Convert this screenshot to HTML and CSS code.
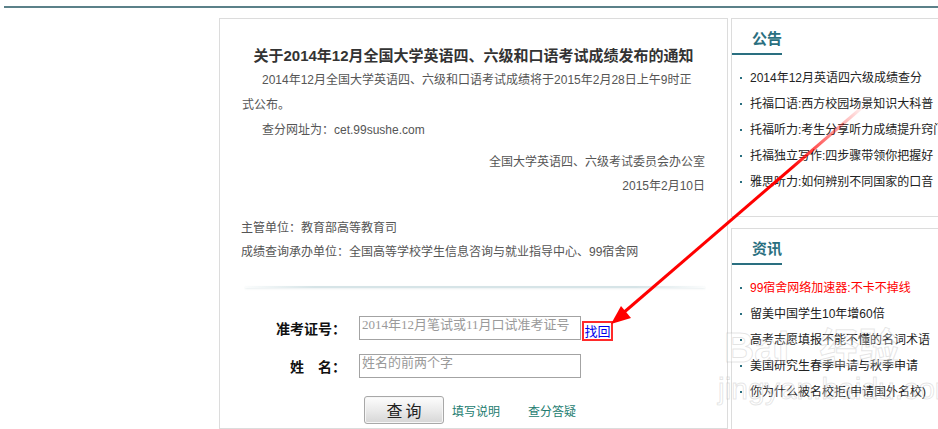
FILE: index.html
```html
<!DOCTYPE html>
<html lang="zh-CN">
<head>
<meta charset="utf-8">
<title>CET 成绩查询</title>
<link rel="stylesheet" href="styles.css">
</head>
<body>
<div class="topline"></div>
<div class="page">
  <div class="main">
    <h1 class="title">关于2014年12月全国大学英语四、六级和口语考试成绩发布的通知</h1>
    <p class="para">2014年12月全国大学英语四、六级和口语考试成绩将于2015年2月28日上午9时正<br>式公布。</p>
    <p class="para">查分网址为：cet.99sushe.com</p>
    <p class="sign">全国大学英语四、六级考试委员会办公室<br>2015年2月10日</p>
    <p class="org">主管单位：教育部高等教育司<br>成绩查询承办单位：全国高等学校学生信息咨询与就业指导中心、99宿舍网</p>
    <div class="sep"></div>
    <form class="query">
      <div class="row">
        <label class="lbl">准考证号：</label>
        <input class="field" type="text" placeholder="2014年12月笔试或11月口试准考证号">
        <a class="find" href="#">找回</a>
      </div>
      <div class="row row2">
        <label class="lbl">姓&emsp;名：</label>
        <input class="field" type="text" placeholder="姓名的前两个字">
      </div>
      <div class="actions">
        <button class="btn" type="button">查询</button>
        <a class="help" href="#">填写说明</a>
        <a class="help help2" href="#">查分答疑</a>
      </div>
    </form>
  </div>
  <div class="side">
    <div class="panel">
      <div class="phead">公告</div>
      <ul class="plist">
        <li>2014年12月英语四六级成绩查分</li>
        <li>托福口语:西方校园场景知识大科普</li>
        <li>托福听力:考生分享听力成绩提升窍门</li>
        <li>托福独立写作:四步骤带领你把握好</li>
        <li>雅思听力:如何辨别不同国家的口音</li>
      </ul>
    </div>
    <div class="panel panel2">
      <div class="phead">资讯</div>
      <ul class="plist">
        <li class="hot">99宿舍网络加速器:不卡不掉线</li>
        <li>留美中国学生10年增60倍</li>
        <li>高考志愿填报不能不懂的名词术语</li>
        <li>美国研究生春季申请与秋季申请</li>
        <li>你为什么被名校拒(申请国外名校)</li>
      </ul>
    </div>
  </div>
</div>
<div class="watermark">
  <div class="wm1">Bai<span class="wm-cn">经验</span></div>
  <div class="wm2">jingyan.baidu.com</div>
</div>
<svg class="arrow" width="938" height="429" viewBox="0 0 938 429">
  <defs>
    <linearGradient id="fade" gradientUnits="userSpaceOnUse" x1="866" y1="104" x2="790" y2="170">
      <stop offset="0" stop-color="#ff0000" stop-opacity="0"/>
      <stop offset="1" stop-color="#ff0000" stop-opacity="1"/>
    </linearGradient>
  </defs>
  <line x1="866" y1="104" x2="622" y2="314" stroke="url(#fade)" stroke-width="3"/>
  <polygon points="611,324 631,318 621,306" fill="#ff0000"/>
</svg>
</body>
</html>
```
FILE: styles.css
```css
html, body {
  margin: 0;
  padding: 0;
  background: #fff;
  overflow: hidden;
}
body {
  font-family: "Liberation Sans", "Noto Sans CJK SC", sans-serif;
  font-size: 12px;
  color: #555;
  width: 938px;
  height: 429px;
  position: relative;
}
.topline {
  margin: 6px 0 0 4px;
  height: 2px;
  background: #5b8189;
}
.page {
  display: flex;
  gap: 3px;
  margin-top: 10px;
  padding-left: 219px;
}
.main {
  box-sizing: border-box;
  width: 509px;
  height: 411px;
  flex: none;
  border: 1px solid #dcdcdc;
  padding: 24px 22px 0 22px;
}
.title {
  margin: 0;
  font-size: 15px;
  line-height: 25px;
  font-weight: bold;
  color: #333;
  text-align: center;
  white-space: nowrap;
}
.para {
  margin: 0;
  line-height: 25px;
  text-indent: 20px;
}
.sign {
  margin: 7px 0 0;
  line-height: 24px;
  text-align: right;
}
.org {
  margin: 18px 0 0;
  line-height: 24px;
  margin-left: -1px;
}
.sep {
  margin: 22px 0 0 3px;
  width: 460px;
  height: 2px;
  background: linear-gradient(to right, rgba(214,228,231,0.1), #d6e4e7 15%, #d6e4e7 85%, rgba(214,228,231,0.1));
  box-shadow: 0 1px 2px rgba(220,230,232,0.6);
}
.query {
  margin-top: 28px;
}
.row {
  display: flex;
  align-items: center;
  height: 24px;
}
.row2 {
  margin-top: 14px;
}
.lbl {
  width: 104px;
  margin-right: 13px;
  text-align: right;
  font-family: "Noto Sans CJK SC", sans-serif;
  font-size: 14px;
  font-weight: bold;
  color: #111;
  white-space: nowrap;
}
.field {
  box-sizing: border-box;
  width: 222px;
  height: 24px;
  margin: 0;
  padding: 0 2px 7px;
  border: 1px solid #a3a3a3;
  font-family: "Liberation Serif", "Noto Sans CJK SC", serif;
  font-size: 13px;
  color: #333;
  background: #fff;
}
.field::placeholder {
  color: #9a9a9a;
  opacity: 1;
}
.find {
  box-sizing: border-box;
  margin: 6px 0 0 1px;
  width: 31px;
  height: 20px;
  border: 2px solid #ff2a2a;
  font-size: 13px;
  line-height: 15px;
  text-align: center;
  color: #0000ee;
  text-decoration: none;
  font-family: "Noto Sans CJK SC", sans-serif;
}
.actions {
  display: flex;
  align-items: center;
  margin: 18px 0 0 122px;
}
.btn {
  box-sizing: border-box;
  width: 80px;
  height: 28px;
  margin: 0;
  padding: 0 0 0 3px;
  border: 1px solid #a8a8a8;
  border-radius: 3px;
  background: linear-gradient(#fdfdfd, #e9e9e9 55%, #d6d6d6);
  font-family: "Noto Sans CJK SC", sans-serif;
  font-size: 16px;
  letter-spacing: 3px;
  color: #222;
  box-shadow: inset 0 0 0 1px #f6f6f6;
}
.help {
  margin-left: 8px;
  font-family: "Noto Sans CJK SC", sans-serif;
  font-size: 12px;
  color: #237c70;
  text-decoration: none;
}
.help2 {
  margin-left: 28px;
}
.side {
  flex: none;
  width: 230px;
}
.panel {
  box-sizing: border-box;
  height: 199px;
  border: 1px solid #dcdcdc;
  border-right: none;
}
.panel2 {
  margin-top: 11px;
  height: 220px;
}
.phead {
  box-sizing: border-box;
  width: 50px;
  padding: 4px 0 0 20px;
  height: 36px;
  line-height: 30px;
  border-bottom: 2px solid #2a6f80;
  font-family: "Noto Sans CJK SC", sans-serif;
  font-size: 15px;
  font-weight: bold;
  color: #2a6f80;
  white-space: nowrap;
}
.plist {
  list-style: none;
  margin: 10px 0 0;
  padding: 0;
}
.plist li {
  position: relative;
  padding-left: 18px;
  line-height: 26px;
  color: #222;
  white-space: nowrap;
}
.plist li::before {
  content: "";
  position: absolute;
  left: 8px;
  top: 12px;
  width: 2px;
  height: 2px;
  background: #2a6f80;
}
.plist li.hot {
  color: #ff0000;
}
.watermark {
  position: absolute;
  left: 724px;
  top: 322px;
  pointer-events: none;
  color: rgba(255,255,255,0.3);
  -webkit-text-stroke: 1px rgba(150,150,150,0.25);
  font-family: "Liberation Sans", "Noto Sans CJK SC", sans-serif;
}
.wm1 {
  font-size: 42px;
  font-weight: bold;
  line-height: 46px;
  white-space: nowrap;
}
.wm-cn {
  margin-left: 30px;
  font-family: "Noto Sans CJK SC", sans-serif;
  font-size: 40px;
}
.wm2 {
  font-size: 30px;
  line-height: 36px;
  white-space: nowrap;
  margin-left: -6px;
}
.arrow {
  position: absolute;
  left: 0;
  top: 0;
  pointer-events: none;
}
```
